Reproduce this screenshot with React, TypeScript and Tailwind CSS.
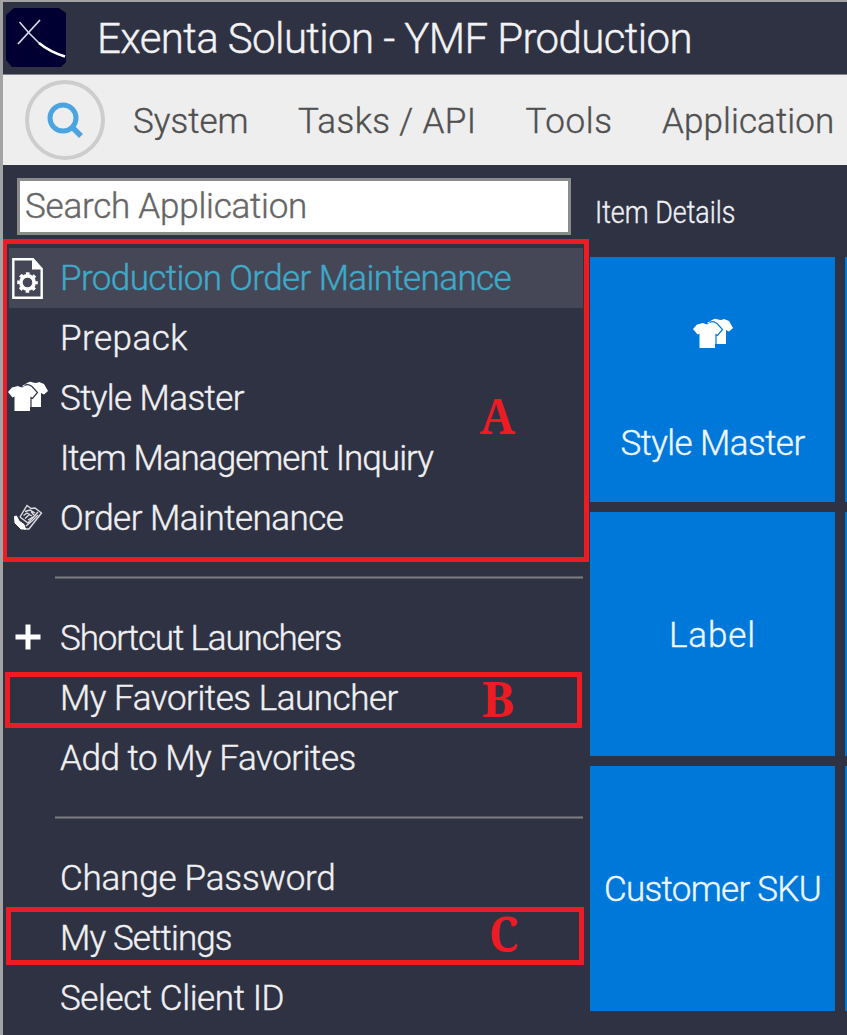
import type { ReactNode } from "react";

function ShirtsIcon() {
  return (
    <svg width="40" height="31" viewBox="0 0 40 31" fill="#fff">
      <path d="M14 5 L20 1.500 Q22 0 25 1.500 Q28 2.500 31 1 L36 3 L40 10 L36 13.500 L33 12 V26 H22 V8 Z" />
      <path d="M0 11 L4 6.500 L10 5 Q14 7.500 18.500 5 L24.500 7 L29 12 L24.500 17 L22 15.500 V30 H6.500 V15.500 L4.500 16.500Z" />
      <path d="M16.500 4.500 Q20 2.500 24 5.500 L29.500 11.500 L24.500 17.500 L23 16.500 V27" fill="none" stroke="currentColor" strokeWidth="1.200" />
    </svg>
  );
}

function DocumentGearIcon() {
  return (
    <svg width="31" height="41" viewBox="0 0 31 41" fill="none">
      <path d="M1.300 1.300 H21 L29.700 11 V39.700 H1.300Z" stroke="#fff" strokeWidth="2.400" />
      <path d="M20 1 V11.500 H30Z" fill="#fff" />
      <circle cx="15.500" cy="24.500" r="8.800" stroke="#fff" strokeWidth="3" strokeDasharray="3.456 3.456" strokeDashoffset="1.728" />
      <circle cx="15.500" cy="24.500" r="6.600" stroke="#fff" strokeWidth="3.600" />
    </svg>
  );
}

function OrderIcon() {
  return (
    <svg width="29" height="27" viewBox="0 0 29 27" fill="none" stroke="#dcdce0" strokeWidth="1.400">
      <path d="M6 13 L13 1.500 L17 4.500 L21 4 L27.500 9 L22 16 L15 25 H10" />
      <path d="M6 13 L14 19 L24 8" />
      <path d="M11 7.500 L16 6 L21 9 M9.500 11.500 L13 9 L18 12 M11 14.500 L16 10 M14 16 L19 13 M17 7.500 L20 11" />
      <path d="M12 22 L18 17 L24 11" />
      <path d="M0.500 12.500 L2.500 12 L5 17 L10 20.500 L11.500 25 H7 L1 19Z" fill="#fff" stroke="#fff" strokeWidth="1" />
    </svg>
  );
}

function PlusIcon() {
  return (
    <svg width="26" height="26" viewBox="0 0 26 26">
      <path d="M13 0.500 V25.500 M0.500 13 H25.500" stroke="#fff" strokeWidth="5" />
    </svg>
  );
}

function LogoIcon() {
  return (
    <svg width="62" height="62" viewBox="0 0 62 62">
      <path d="M9 1 H54 L61 6 V55 L56 60 H7 L1 53 V8Z" fill="#000033" />
      <path d="M14.500 15 L24 26 L34 36 Q45 45 60 49.500" fill="none" stroke="#d8d8e2" strokeWidth="1.600" />
      <path d="M34 36 Q45 45 60 49.500" fill="none" stroke="#fff" strokeWidth="2.500" />
      <path d="M35 13 L13 37" fill="none" stroke="#d8d8e2" strokeWidth="1.800" />
    </svg>
  );
}

type RowProps = { icon?: ReactNode; tracking: string; active?: boolean; children: string };

function Row({ icon, tracking, active, children }: RowProps) {
  return (
    <li className={`flex h-[60px] items-center ${active ? "bg-[#454756] text-[#3fa9c9]" : "text-[#f0f0f2]"}`}>
      <span className="flex w-[51px] shrink-0 items-center text-[#2f3243]">{icon}</span>
      <span className={`whitespace-nowrap ${tracking}`}>{children}</span>
    </li>
  );
}

function Divider() {
  return (
    <li className="flex h-[60px] items-center pb-[2px] pl-[46px]">
      <span className="h-[3px] w-full border-y border-[#555764] bg-[#7d7d82]" />
    </li>
  );
}

function Tile({ children }: { children?: ReactNode }) {
  return <div className="flex h-[244.500px] flex-col items-center justify-center bg-[#0078d9] text-[#eef6fd]">{children}</div>;
}

export default function App() {
  return (
    <div className="relative flex h-[1035px] w-[847px] flex-col overflow-hidden border-l-[3px] border-t-[2px] border-[#a3a3a3] bg-[#2f3243] font-['Roboto',sans-serif] text-[35px] leading-none font-light [-webkit-text-stroke:0.4px]">
      <header className="flex h-[73px] shrink-0 items-center border-b border-[#85838f] pl-[2px] text-[#f2f2f4]">
        <LogoIcon />
        <h1 className="mt-[2px] ml-[30px] text-[42px] font-light whitespace-nowrap tracking-[-0.6px]">Exenta Solution - YMF Production</h1>
      </header>

      <nav className="flex h-[90px] shrink-0 items-center bg-[#eeeeee] text-[#505050]">
        <span className="ml-[22px] flex size-[80px] items-center justify-center rounded-full border-4 border-[#cdcdcd]">
          <svg width="36" height="36" viewBox="0 0 36 36" fill="none" stroke="#4ba3df" className="-mt-px">
            <circle cx="16" cy="16" r="13" strokeWidth="5" />
            <path d="M25 25 L34 34" strokeWidth="5.500" />
          </svg>
        </span>
        <div className="flex pt-[2px]">
          <span className="ml-[28px] w-[165px]">System</span>
          <span className="w-[227.500px] whitespace-nowrap tracking-[0.4px]">Tasks / API</span>
          <span className="w-[136.500px] tracking-[0.6px]">Tools</span>
          <span className="tracking-[0.1px]">Application</span>
        </div>
      </nav>

      <main className="flex min-h-0 flex-1 pl-[3px]">
        <aside className="w-[577px] shrink-0 pt-[13px]">
          <div className="ml-[11px] flex h-[57px] w-[554px] items-center border-[3px] border-[#8b8b8b] bg-white pl-[5px] text-[#666666]">
            <span className="tracking-[-0.22px]">Search Application</span>
          </div>
          <ul className="mt-[13px] ml-[3px] w-[574px]">
            <Row active icon={<span className="ml-[3px]"><DocumentGearIcon /></span>} tracking="mt-px tracking-[-0.6px]">Production Order Maintenance</Row>
            <Row tracking="mt-px tracking-[0.5px]">Prepack</Row>
            <Row icon={<span className="-mt-[4px] -ml-px"><ShirtsIcon /></span>} tracking="mt-px tracking-[-0.6px]">Style Master</Row>
            <Row tracking="mt-px tracking-[-0.96px]">Item Management Inquiry</Row>
            <Row icon={<span className="-mt-px ml-[5px]"><OrderIcon /></span>} tracking="mt-px tracking-[-0.5px]">Order Maintenance</Row>
            <Divider />
            <Row icon={<span className="-mt-[2px] ml-[6px]"><PlusIcon /></span>} tracking="tracking-[-1.12px]">Shortcut Launchers</Row>
            <Row tracking="tracking-[-0.45px]">My Favorites Launcher</Row>
            <Row tracking="tracking-[-0.45px]">Add to My Favorites</Row>
            <Divider />
            <Row tracking="tracking-[-0.2px]">Change Password</Row>
            <Row tracking="tracking-[-0.85px]">My Settings</Row>
            <Row tracking="tracking-[-0.4px]">Select Client ID</Row>
          </ul>
        </aside>

        <section className="ml-[7px] w-[245px] shrink-0">
          <h2 className="flex h-[92px] origin-left scale-x-[0.84] items-center pt-[2px] pl-[6px] text-[32px] font-light whitespace-nowrap text-[#f0f0f2]">Item Details</h2>
          <div className="flex flex-col gap-[10px]">
            <Tile>
              <span className="mt-[21px] text-[#0078d9]"><ShirtsIcon /></span>
              <span className="mt-[77px] tracking-[-0.57px]">Style Master</span>
            </Tile>
            <Tile><span className="pt-[4px] tracking-[0.9px]">Label</span></Tile>
            <Tile><span className="pt-[3px] whitespace-nowrap tracking-[-0.7px]">Customer SKU</span></Tile>
          </div>
        </section>
        <section className="ml-[10px] flex w-[245px] shrink-0 flex-col gap-[10px] pt-[92px]">
          <Tile />
          <Tile />
          <Tile />
        </section>
      </main>

      <div className="absolute top-[237px] left-[-1px] h-[323px] w-[587px] border-5 border-[#ed1c24]" />
      <div className="absolute top-[670px] left-[2px] h-[56px] w-[577px] border-5 border-[#ed1c24]" />
      <div className="absolute top-[905px] left-[3px] h-[58px] w-[578px] border-5 border-[#ed1c24]" />
      <div className="font-['Noto_Serif','DejaVu_Serif',serif] text-[49px] font-bold text-[#ed1c24] [-webkit-text-stroke:0px]">
        <span className="absolute top-[389px] left-[477px] origin-left scale-x-[0.96]">A</span>
        <span className="absolute top-[672px] left-[479px] origin-left">B</span>
        <span className="absolute top-[907px] left-[486px] origin-left scale-x-[0.9]">C</span>
      </div>
    </div>
  );
}
